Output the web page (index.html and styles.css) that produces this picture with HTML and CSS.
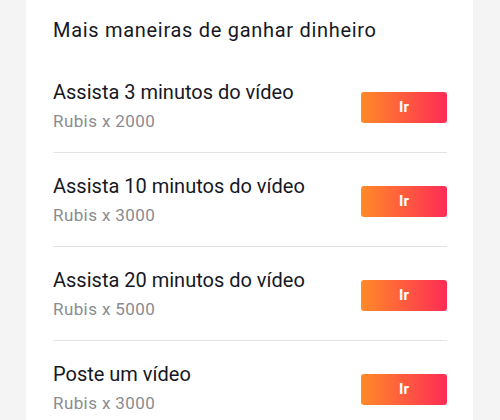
FILE: index.html
```html
<!DOCTYPE html>
<html lang="pt-BR">
<head>
    <meta charset="UTF-8">
    <meta name="viewport" content="width=device-width, initial-scale=1.0">
    <title>Ganhar dinheiro</title>
    <link rel="stylesheet" href="styles.css">
</head>
<body>
    <div class="card">
        <h2 class="card-title">Mais maneiras de ganhar dinheiro</h2>

        <div class="tarefa">
            <div class="tarefa-info">
                <div class="tarefa-nome">Assista 3 minutos do vídeo</div>
                <div class="tarefa-premio">Rubis x 2000</div>
            </div>
            <button class="btn-ir">Ir</button>
        </div>

        <div class="tarefa">
            <div class="tarefa-info">
                <div class="tarefa-nome">Assista 10 minutos do vídeo</div>
                <div class="tarefa-premio">Rubis x 3000</div>
            </div>
            <button class="btn-ir">Ir</button>
        </div>

        <div class="tarefa">
            <div class="tarefa-info">
                <div class="tarefa-nome">Assista 20 minutos do vídeo</div>
                <div class="tarefa-premio">Rubis x 5000</div>
            </div>
            <button class="btn-ir">Ir</button>
        </div>

        <div class="tarefa">
            <div class="tarefa-info">
                <div class="tarefa-nome">Poste um vídeo</div>
                <div class="tarefa-premio">Rubis x 3000</div>
            </div>
            <button class="btn-ir">Ir</button>
        </div>
    </div>
</body>
</html>
```

FILE: styles.css
```css
:root {
    --texto: #161823;
    --cinza: #8a8b91;
    --borda: #e3e3e4;
    --fundo: #f4f4f4;
    --laranja: #ff8a28;
    --rosa: #fe2c55;
}

* {
    box-sizing: border-box;
    margin: 0;
    padding: 0;
    font-family: Roboto, 'Liberation Sans', Arial, sans-serif;
}

body {
    background-color: var(--fundo);
    color: var(--texto);
}

.card {
    background: white;
    margin: -8px 27px 0 26px;
    border-radius: 10px;
    padding: 26px 26px 0 27px;
}

.card-title {
    font-size: 20px;
    font-weight: 400;
    line-height: 24px;
    letter-spacing: 0.7px;
    margin-bottom: 17px;
}

/* Linha de tarefa */
.tarefa {
    display: flex;
    align-items: center;
    justify-content: space-between;
    padding: 21px 0 21px;
    border-bottom: 1px solid var(--borda);
}

.tarefa-nome {
    font-size: 20px;
    line-height: 24px;
}

.tarefa-premio {
    font-size: 17px;
    line-height: 20px;
    letter-spacing: 0.4px;
    color: var(--cinza);
    margin-top: 7px;
}

.btn-ir {
    width: 86px;
    height: 31px;
    margin-top: 3px;
    border: none;
    border-radius: 3px;
    background: linear-gradient(to right, var(--laranja), var(--rosa));
    color: white;
    font-size: 15px;
    font-weight: 700;
    cursor: pointer;
}
```
